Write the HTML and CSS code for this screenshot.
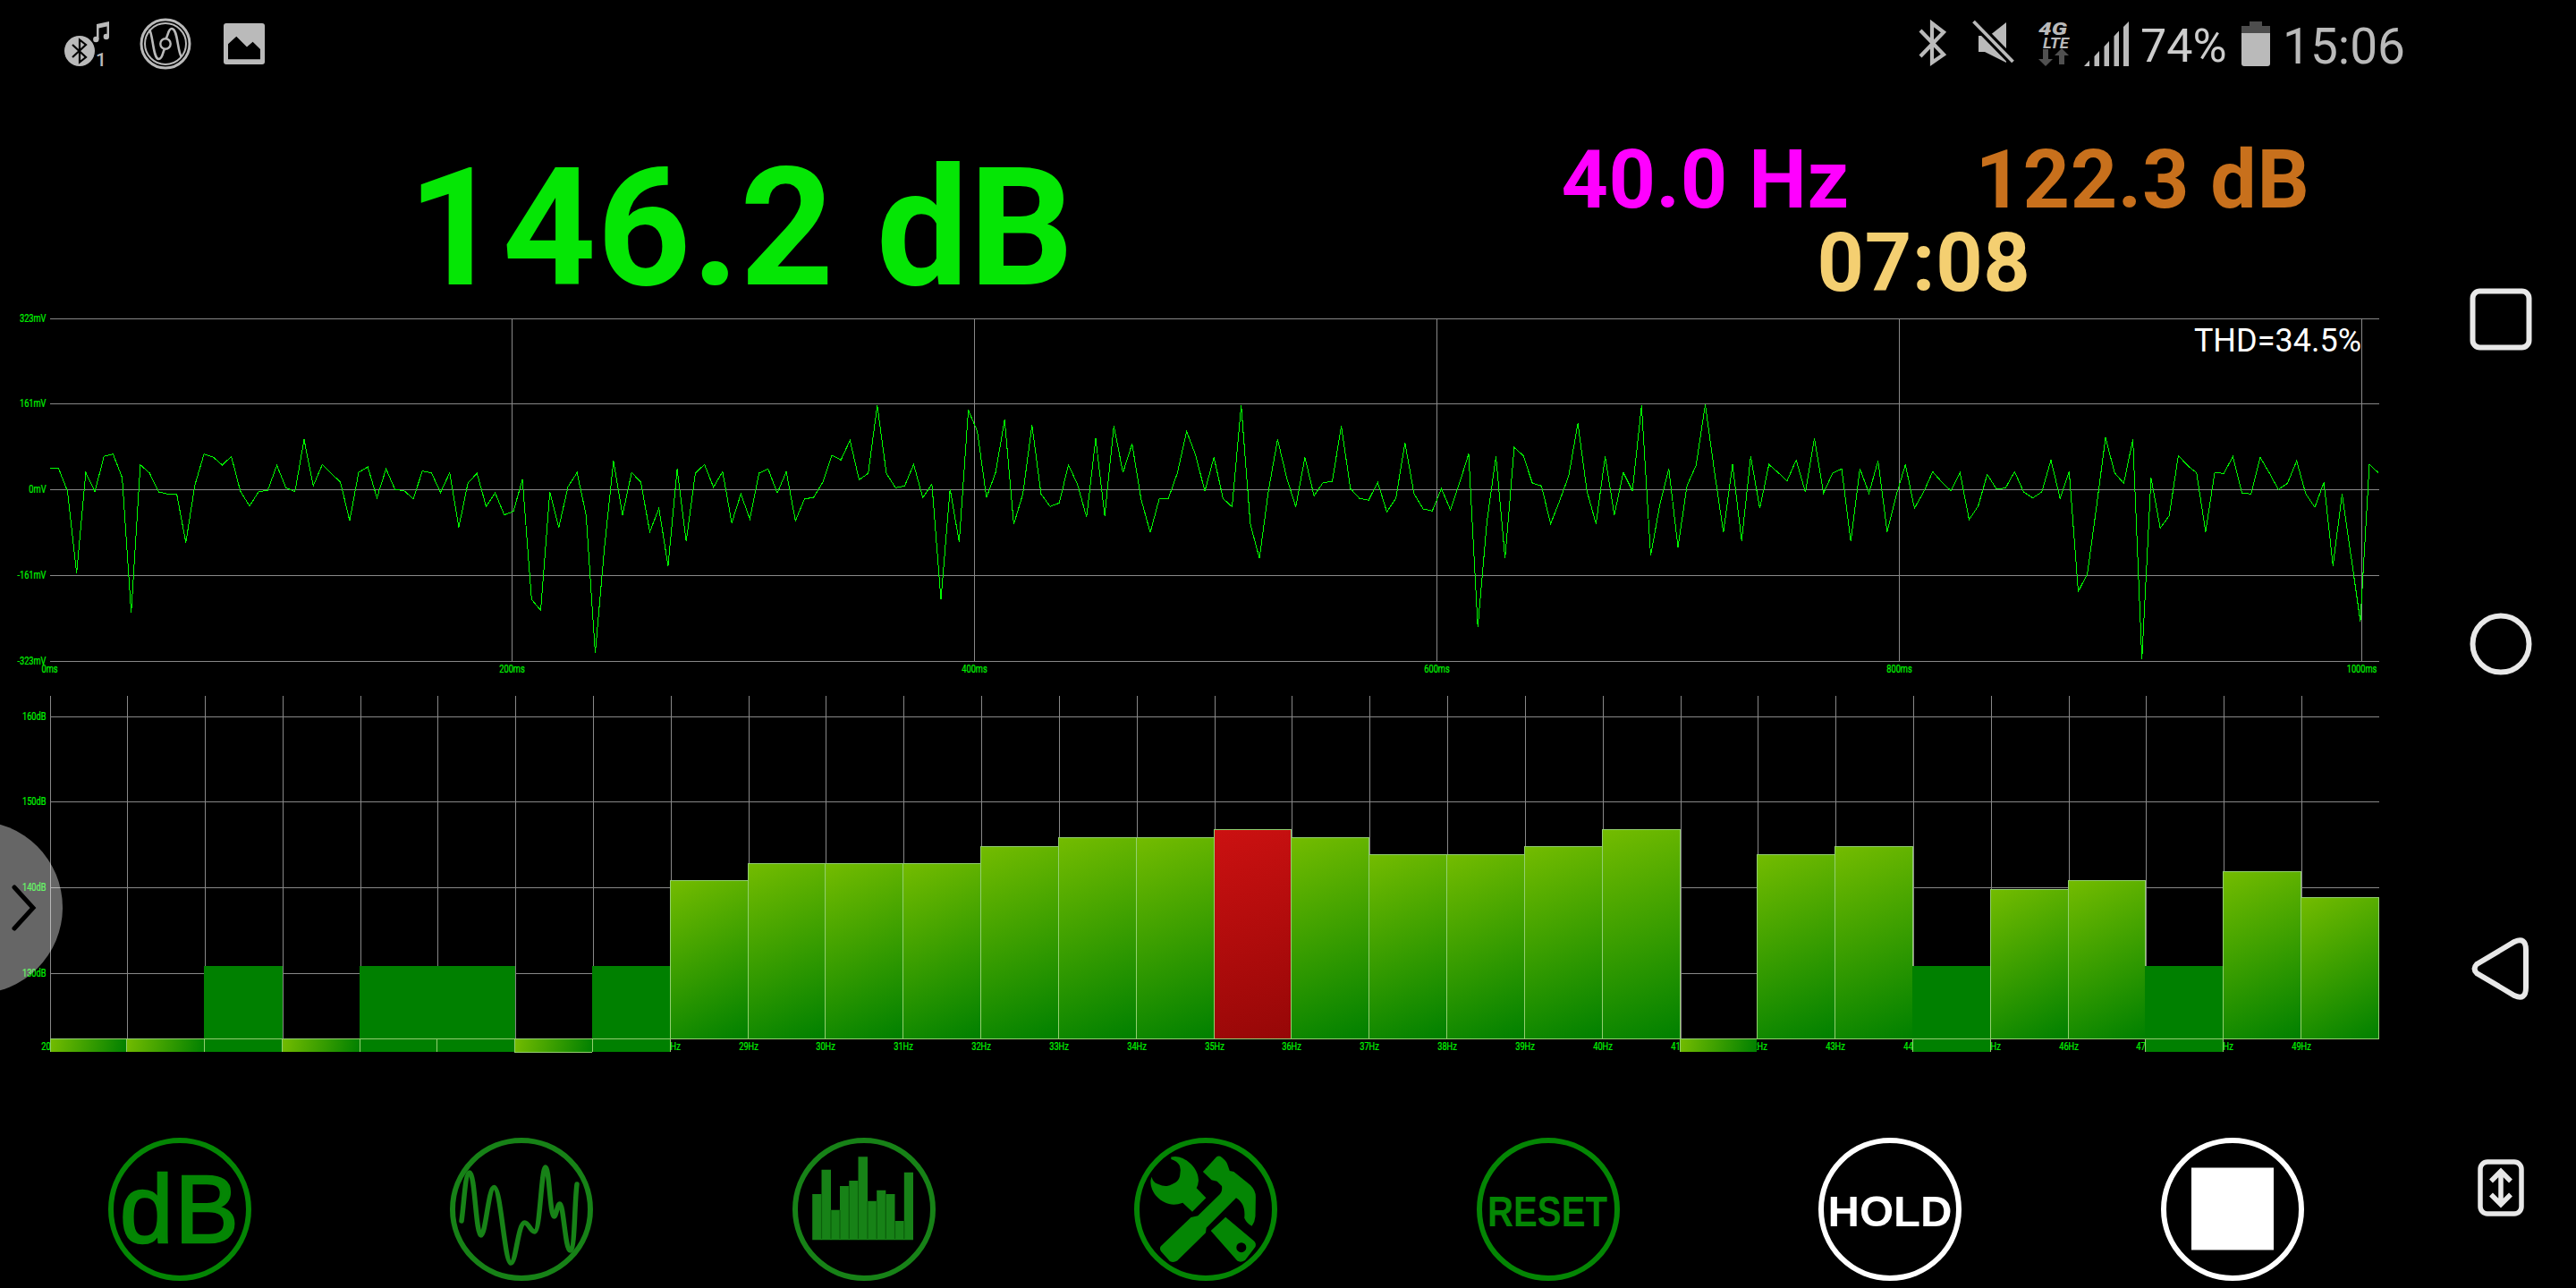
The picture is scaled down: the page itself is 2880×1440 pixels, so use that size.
FILE: index.html
```html
<!DOCTYPE html>
<html lang="en">
  <head>
    <meta charset="UTF-8" />
    <meta name="viewport" content="width=device-width, initial-scale=1.0" />
    <title>SPL Meter</title>
    <link rel="stylesheet" href="styles.css">
  </head>
  <body>
    <div class="main">
      <header class="status-bar">
        <div class="status-left">
          <svg class="icon-music" width="52" height="58" viewBox="71 20 52 58">
            <circle cx="89" cy="57" r="17" fill="#bababa" />
            <path d="M81 50 L96 64 L89 69.500 V44.500 L96 50 L81 64" fill="none" stroke="#000" stroke-width="2.200" />
            <path d="M108 27 L122 24 V41 H119.500 V29.500 L110.500 31.500 V44 H108 Z" fill="#bababa" />
            <circle cx="107.300" cy="44" r="3.200" fill="#bababa" />
            <circle cx="118.800" cy="41" r="3.200" fill="#bababa" />
            <text class="bt-count" x="107" y="74">1</text>
          </svg>
          <svg width="58" height="58" viewBox="156 20 58 58" fill="none" stroke="#bababa">
            <circle cx="185" cy="49" r="27" stroke-width="3" />
            <circle cx="185" cy="49" r="23" stroke-width="2" />
            <path d="M167 33 C171 38 171 66 177.500 66 C182 66 182 57 184 55" stroke-width="2.600" />
            <path d="M185.500 43 C188 40 188 32 192 32 C199 32 198 57 203 64" stroke-width="2.600" />
            <circle cx="185" cy="49" r="5.700" stroke-width="2.400" />
          </svg>
          <svg class="icon-picture" width="46" height="46" viewBox="250 26 46 46">
            <rect x="250" y="26" width="46" height="46" rx="3" fill="#bababa" />
            <path d="M255 49.300 L264.300 40.700 L276 52.500 L282.600 46.700 L291 55 V66.300 H255 Z" fill="#000" />
          </svg>
        </div>
        <div class="status-right">
          <svg width="180" height="62" viewBox="2144 18 180 62">
            <path d="M2147 34 L2173 61 L2160 70 V26 L2173 36 L2147 63" fill="none" stroke="#bababa" stroke-width="4.200" />
            <path d="M2243 25 V70 L2219 58 H2212 V40 H2224 Z" fill="#bababa" />
            <path d="M2206.500 24 L2250.500 69" stroke="#000" stroke-width="10" />
            <path d="M2206.500 24 L2250.500 69" stroke="#bababa" stroke-width="3.800" />
            <text class="net-4g" x="2279" y="38.500" textLength="32" lengthAdjust="spacingAndGlyphs">4G</text>
            <text class="net-lte" x="2284" y="53.500" textLength="29" lengthAdjust="spacingAndGlyphs">LTE</text>
            <path d="M2284 55 H2290 V66 H2295 L2287 74 L2279 66 H2284 Z" fill="#505050" />
            <path d="M2302 72 H2308 V62 H2313 L2305 54 L2297 62 H2302 Z" fill="#505050" />
          </svg>
          <svg class="icon-signal" width="51" height="50" viewBox="0 0 51 50">
            <path d="M0 50 L6 43.500 V50 Z M11.500 39 L17 33 V50 H11.500 Z M22.500 28 L28 22 V50 H22.500 Z M33.500 16.500 L39 10.500 V50 H33.500 Z M44 6 L50 0 V50 H44 Z" fill="#bababa" />
          </svg>
          <span class="battery-text">74%</span>
          <svg class="icon-battery" width="32" height="50" viewBox="0 0 32 50">
            <path d="M9 0 H23 V5 H32 V14 H0 V5 H9 Z" fill="#4d4d4d" />
            <path d="M0 13 H32 V47 Q32 50 29 50 H3 Q0 50 0 47 Z" fill="#bababa" />
          </svg>
          <span class="clock">15:06</span>
        </div>
      </header>

      <section class="readings">
        <div class="level">146.2 dB</div>
        <div class="details">
          <span class="freq">40.0 Hz</span>
          <span class="peak">122.3 dB</span>
          <span class="timer">07:08</span>
        </div>
      </section>

      <svg class="chart" id="wave" width="2712" height="415" viewBox="0 345 2712 415"></svg>
      <svg class="chart" id="spectrum" width="2712" height="430" viewBox="0 760 2712 430"></svg>

      <nav class="toolbar">
        <button class="tool">
          <svg viewBox="0 0 160 160">
            <circle class="ring" cx="80" cy="80" r="77" />
            <text class="tool-db" x="13" y="116.500">dB</text>
          </svg>
        </button>
        <button class="tool soft">
          <svg viewBox="0 0 160 160">
            <circle class="ring" cx="80" cy="80" r="77" />
            <path class="line" d="M13 93 C16 72 17 39 22 39 C28 39 29 109 34.700 109 C40 109 43 55.500 49.400 55.500 C57 55.500 61 140 68.200 140 C74 140 76 95 83.700 95 C88 95 90 105 94.700 105 C101 105 102 33 107 33 C111 33 112 88 116.300 88 C119 88 120 74 122.900 74 C127 74 129 126 134.300 126 C140 126 139 75 142 52" />
          </svg>
        </button>
        <button class="tool soft">
          <svg viewBox="0 0 160 160">
            <circle class="ring" cx="80" cy="80" r="77" />
            <path class="fill" d="M22.200 114.300 V63 H32.500 V35.700 H43 V80.700 H53 V54 H63.300 V48 H73.500 V21.300 H84 V70.700 H94.200 V58.700 H104.300 V63 H114.500 V93 H124.800 V38.700 H135 V114.300 Z" />
            <path class="gaps" d="M32.500 63 V113 M43 81 V113 M53 81 V113 M63.300 54 V113 M73.500 48 V113 M84 71 V113 M94.200 71 V113 M104.300 63 V113 M114.500 93 V113 M124.800 93 V113" />
          </svg>
        </button>
        <button class="tool">
          <svg viewBox="0 0 160 160">
            <circle class="ring" cx="80" cy="80" r="77" />
            <path class="fill" d="M41.300 21.600 Q46 20.500 50 21.600 C62 25 72 36 72 48 Q71.500 53 69.700 56.300 L80.400 67.300 L65 82.700 L54.300 72.700 Q49 74.700 44.400 74.700 C30 74 18 62 18.400 48 L19.500 43.700 C21 49 24 51 27.200 52 Q32 54.500 36.700 54 C45 52 51 48 51.300 41 Q52.500 36 50.900 31.300 Q48 26 41.300 24 Z" />
            <path class="fill" fill-rule="evenodd" d="M102.200 88.700 L133.500 115 Q137 118 135.500 122 L124 137 Q119 140 115.200 137.500 L85.700 104 Z M114.300 122.700 a5.500 5.500 0 1 0 11 0 a5.500 5.500 0 1 0 -11 0 Z" />
            <path class="fill" d="M92 21.500 Q95 19.500 98 22 Q103 26 104 29 L106.800 37 L111.400 38 L130 53 Q136 59 135.900 66.300 L135.500 88 Q135 94 131.600 98.700 Q126 96 123.200 89.700 Q125 74 114 67.300 L80.700 100.700 L80 106.300 L48.200 137.500 Q44 140 39.800 138 L30 127 Q28 124 29.800 121.300 L63.500 89 L71.200 87.300 L96 63 Q99 59 98 54 L92.600 48.700 L86.500 47.300 L76.900 38 Z" />
          </svg>
        </button>
        <button class="tool">
          <svg viewBox="0 0 160 160">
            <circle class="ring" cx="80" cy="80" r="77" />
            <text class="tool-label" x="12" y="98.500" textLength="134" lengthAdjust="spacingAndGlyphs">RESET</text>
          </svg>
        </button>
        <button class="tool active">
          <svg viewBox="0 0 160 160">
            <circle class="ring" cx="80" cy="80" r="77" />
            <text class="tool-label" x="10.500" y="98.500" textLength="139" lengthAdjust="spacingAndGlyphs">HOLD</text>
          </svg>
        </button>
        <button class="tool active">
          <svg viewBox="0 0 160 160">
            <circle class="ring" cx="80" cy="80" r="77" />
            <rect class="fill" x="34" y="33.500" width="92" height="92" />
          </svg>
        </button>
      </nav>
    </div>

    <aside class="nav-bar">
      <svg width="70" height="70" viewBox="0 0 70 70"><rect x="3.500" y="3.500" width="63" height="63" rx="8" /></svg>
      <svg width="70" height="70" viewBox="0 0 70 70"><circle cx="35" cy="35" r="31.500" /></svg>
      <svg width="70" height="70" viewBox="0 0 70 70"><path d="M8 30 L50 5 Q63 -1 63 14 V56 Q63 71 50 65 L8 40 Q3 35 8 30 Z" /></svg>
      <svg class="nav-resize" width="54" height="66" viewBox="0 0 54 66">
        <rect x="4" y="4" width="46" height="58" rx="8" />
        <path d="M27 15 V51 M16 25.500 L27 14.500 L38 25.500 M16 40.500 L27 51.500 L38 40.500" />
      </svg>
    </aside>

    <div class="drawer-handle">
      <svg width="30" height="54" viewBox="0 0 30 54"><path d="M4 4 L25 27 L4 50" /></svg>
    </div>

    <script>
      const NS = "http://www.w3.org/2000/svg";
      const wave = document.getElementById("wave");
      const spectrum = document.getElementById("spectrum");
      const LEFT = 56;
      const RIGHT = 2660;

      function add(parent, tag, attrs, text) {
        const el = document.createElementNS(NS, tag);
        for (const key in attrs) el.setAttribute(key, attrs[key]);
        if (text) el.textContent = text;
        parent.appendChild(el);
        return el;
      }

      function box(parent, x, y, w, h, cls) {
        return add(parent, "rect", { x: x, y: y, width: w, height: h, class: cls });
      }

      // axis labels are condensed to 77% of their width
      function label(parent, x, y, text, anchor) {
        add(parent, "text", {
          transform: `translate(${x} ${y}) scale(0.77 1)`,
          "text-anchor": anchor,
          class: "axis"
        }, text);
      }

      // oscilloscope
      const volts = ["323mV", "161mV", "0mV", "-161mV", "-323mV"];
      [356, 451, 547, 643, 739].forEach((y, i) => {
        box(wave, LEFT, y, RIGHT - LEFT, 1, "grid");
        label(wave, 51.5, y + 4, volts[i], "end");
      });
      for (let i = 0; i <= 5; i++) {
        const x = Math.round(55.4 + i * 517);
        if (i > 0) box(wave, x, 356, 1, 383, "grid");
        label(wave, x + 0.5, 752, i * 200 + "ms", "middle");
      }

      // samples in thirds of a pixel below y = 340
      const samples = [
        550,550,628,902,565,629,511,503,582,1036,539,566,630,637,637,800,607,503,513,540,
        511,628,677,629,625,541,616,629,454,610,538,568,598,727,564,546,650,553,622,626,
        653,560,566,632,565,749,601,567,679,633,707,695,588,991,1027,631,749,613,565,708,
        1171,820,526,707,565,597,764,685,878,553,796,567,538,614,562,734,637,721,567,553,
        634,562,727,653,649,598,507,523,457,589,568,340,568,616,610,538,649,604,991,620,
        799,355,427,649,565,388,739,637,406,637,679,667,539,604,715,451,710,409,565,469,
        655,766,652,652,565,427,508,628,514,652,680,340,738,853,625,454,583,680,514,643,
        598,596,409,619,652,658,598,697,652,466,637,687,694,619,691,600,502,1084,730,511,
        853,481,508,600,610,737,660,575,400,627,737,511,707,565,626,340,844,675,553,815,
        609,540,337,560,766,538,794,511,685,538,565,593,523,631,451,634,567,553,796,553,
        634,526,764,640,538,685,630,562,597,626,565,723,678,571,620,617,562,630,650,630,
        523,652,562,964,905,680,448,566,601,454,1192,583,751,710,508,541,566,764,565,568,
        511,634,637,514,566,622,601,526,636,682,598,878,637,850,1064,538,566
      ];
      const step = 2604 / (samples.length - 1);
      const points = samples.map((v, i) => `${(Math.max(LEFT, 55.2 + i * step)).toFixed(1)},${(340 + v / 3).toFixed(1)}`);
      add(wave, "polyline", { points: points.join(" "), class: "trace" });
      add(wave, "text", { x: 2640, y: 393, "text-anchor": "end", class: "thd" }, "THD=34.5%");

      // spectrum, 20Hz to 49Hz. A number is the bar top, "low" stays under the
      // base line, "flat" is a plain block that crosses it
      const BASE = 1161;
      const bands = [
        "low", "low", "flat", "low", "flat", "flat", "low", "flat", 984, 965,
        965, 965, 946, 936, 936, 927, 936, 955, 955, 946,
        927, "low", 955, 946, "flat", 994, 984, "flat", 974, 1003
      ];
      const bandX = (i) => Math.max(LEFT, Math.floor(54.8 + i * 86.82));
      const levels = ["160dB", "150dB", "140dB", "130dB"];
      [801, 896, 992, 1088].forEach((y, i) => {
        box(spectrum, LEFT, y, RIGHT - LEFT, 1, "grid");
        label(spectrum, 51.5, y + 4, levels[i], "end");
      });
      bands.forEach((band, i) => {
        box(spectrum, bandX(i) + (i > 0 ? 1 : 0), 778, 1, BASE - 778, "grid");
        label(spectrum, bandX(i) + 1, 1174, 20 + i + "Hz", "middle");
      });

      const defs = add(spectrum, "defs", {});
      bands.forEach((band, i) => {
        const x = bandX(i);
        const w = bandX(i + 1) - x;
        if (band === "flat") {
          box(spectrum, x, 1080, w + 1, 96, "flat");
          box(spectrum, x, BASE, 1, 15, "edge");
          return;
        }
        const top = band === "low" ? BASE : band;
        const bottom = band === "low" ? 1176 : BASE;
        const red = i === 15;
        const grad = add(defs, "linearGradient", {
          id: "band" + i,
          gradientUnits: "userSpaceOnUse",
          x1: x, y1: top, x2: x + w, y2: bottom
        });
        add(grad, "stop", { offset: 0, "stop-color": red ? "#cc1111" : "#74bc00" });
        add(grad, "stop", { offset: 1, "stop-color": red ? "#960707" : "#008000" });
        add(spectrum, "rect", { x: x, y: top, width: w, height: bottom - top, fill: `url(#band${i})` });
        box(spectrum, x, top, 1, bottom - top, "edge");
        if (band !== "low") {
          box(spectrum, x, top, w + 1, 1, "edge");
          box(spectrum, x + w, top, 1, bottom - top, "edge");
        }
      });
      box(spectrum, bandX(6), 1176, 87, 1, "edge");
      box(spectrum, bandX(8), BASE, 1, 15, "edge");
      box(spectrum, bandX(25), BASE, 1, 15, "edge");
      box(spectrum, bandX(28), BASE, 1, 15, "edge");
      box(spectrum, LEFT, BASE, RIGHT - LEFT, 1, "edge");
    </script>
  </body>
</html>
```
FILE: styles.css
```css
body {
  margin: 0;
  width: 2880px;
  height: 1440px;
  display: flex;
  position: relative;
  overflow: hidden;
  background: #000;
  font-family: Roboto, "Liberation Sans", sans-serif;
}

svg {
  display: block;
  overflow: visible;
}

.main {
  width: 2712px;
  height: 1440px;
}

/* status bar */
.status-bar {
  height: 98px;
  display: flex;
  justify-content: space-between;
  box-sizing: border-box;
  padding: 0 22px 0 71px;
  color: #bababa;
}

.status-left {
  display: flex;
  align-items: center;
  gap: 33px;
  height: 98px;
}

.icon-picture {
  margin-left: 3px;
}

.bt-count {
  font-size: 21px;
  font-weight: 500;
  fill: #bababa;
}

.net-4g {
  font-size: 20.5px;
  font-weight: 900;
  font-style: italic;
  fill: #bababa;
}

.net-lte {
  font-size: 16px;
  font-weight: 700;
  font-style: italic;
  fill: #bababa;
}

.status-right {
  display: flex;
  align-items: center;
  height: 98px;
}

.icon-signal {
  margin-left: 6px;
}

.battery-text {
  margin-left: 12px;
  padding-top: 5px;
  width: 113px;
  line-height: 60px;
  font-size: 52px;
  color: #cdcdcd;
}

.clock {
  margin-left: 14px;
  padding-top: 6px;
  width: 138px;
  line-height: 60px;
  font-size: 55px;
}

/* readings */
.readings {
  height: 247px;
  display: flex;
  font-weight: 700;
  font-kerning: none;
}

.level {
  width: 1662px;
  box-sizing: border-box;
  padding-right: 5px;
  line-height: 315px;
  text-align: center;
  font-size: 183px;
  letter-spacing: 0.9px;
  color: #05e605;
}

.details {
  width: 978px;
  height: 186px;
  padding-top: 56px;
  display: grid;
  grid-template-columns: 1fr 1fr;
  grid-template-rows: 93px 93px;
  line-height: 93px;
  text-align: center;
  font-size: 91.5px;
  letter-spacing: 0.6px;
}

.freq {
  color: #ff00ff;
}

.peak {
  color: #c8701c;
}

.timer {
  grid-column: 1 / 3;
  color: #f4cf71;
}

/* charts */
.grid {
  fill: #888;
}

.axis {
  font-size: 12px;
  fill: #00f000;
  stroke: #00f000;
  stroke-width: 0.25;
}

.trace {
  fill: none;
  stroke: #00ff00;
  stroke-width: 1;
  shape-rendering: crispEdges;
}

.thd {
  font-size: 36px;
  fill: #fff;
}

.flat {
  fill: #008000;
}

.edge {
  fill: #93cf70;
}

/* toolbar */
.toolbar {
  display: flex;
  padding: 82px 0 0 9.6px;
}

.tool {
  flex: 0 0 382.5px;
  height: 160px;
  padding: 0;
  border: none;
  background: none;
  color: #048604;
  cursor: pointer;
}

.tool.soft {
  color: #178217;
}

.tool.active {
  color: #fff;
}

.tool svg {
  width: 160px;
  height: 160px;
  margin: 0 auto;
}

.ring,
.line {
  fill: none;
  stroke: currentColor;
  stroke-width: 6;
}

.line {
  stroke-width: 5.5;
  stroke-linecap: round;
}

.fill {
  fill: currentColor;
}

.gaps {
  stroke: #0b5f0b;
  stroke-width: 1.2;
}

.tool-db {
  font-family: "Liberation Sans", sans-serif;
  font-size: 107px;
  letter-spacing: 2px;
  fill: currentColor;
  stroke: currentColor;
  stroke-width: 2.4;
}

.tool-label {
  font-size: 48px;
  font-weight: 700;
  fill: currentColor;
}

/* system navigation */
.nav-bar {
  width: 168px;
  box-sizing: border-box;
  padding-top: 322px;
  display: flex;
  flex-direction: column;
  align-items: center;
  gap: 293px;
}

.nav-bar svg {
  flex: none;
  fill: none;
  stroke: #e8e8e8;
  stroke-width: 6;
}

.nav-bar .nav-resize {
  margin-top: -116px;
  stroke-width: 5.5;
}

/* edge panel handle */
.drawer-handle {
  position: absolute;
  left: -123px;
  top: 918px;
  width: 193px;
  height: 193px;
  border-radius: 50%;
  display: flex;
  align-items: center;
  justify-content: flex-end;
  box-sizing: border-box;
  padding-right: 28px;
  background: rgba(255, 255, 255, 0.4);
}

.drawer-handle path {
  fill: none;
  stroke: #000;
  stroke-width: 5;
  stroke-linecap: round;
}
```
